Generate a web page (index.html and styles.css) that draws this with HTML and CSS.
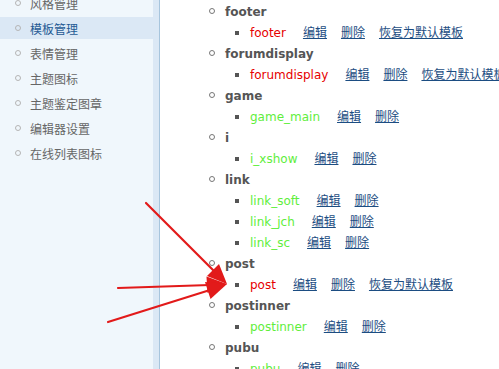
FILE: index.html
```html
<!DOCTYPE html>
<html>
<head>
<meta charset="utf-8">
<link rel="stylesheet" href="styles.css">
</head>
<body>
<div class="page">
  <aside class="sidebar">
    <ul class="menu">
      <li class="menu-item">风格管理</li>
      <li class="menu-item active">模板管理</li>
      <li class="menu-item">表情管理</li>
      <li class="menu-item">主题图标</li>
      <li class="menu-item">主题鉴定图章</li>
      <li class="menu-item">编辑器设置</li>
      <li class="menu-item">在线列表图标</li>
    </ul>
  </aside>
  <main class="main">
    <ul class="tree">
      <li class="group"><span class="label">footer</span>
        <ul class="files">
          <li class="file"><span class="name red">footer</span><a class="op first" href="#">编辑</a><a class="op" href="#">删除</a><a class="op" href="#">恢复为默认模板</a></li>
        </ul>
      </li>
      <li class="group"><span class="label">forumdisplay</span>
        <ul class="files">
          <li class="file"><span class="name red">forumdisplay</span><a class="op first" href="#">编辑</a><a class="op" href="#">删除</a><a class="op" href="#">恢复为默认模板</a></li>
        </ul>
      </li>
      <li class="group"><span class="label">game</span>
        <ul class="files">
          <li class="file"><span class="name green">game_main</span><a class="op first" href="#">编辑</a><a class="op" href="#">删除</a></li>
        </ul>
      </li>
      <li class="group"><span class="label">i</span>
        <ul class="files">
          <li class="file"><span class="name green">i_xshow</span><a class="op first" href="#">编辑</a><a class="op" href="#">删除</a></li>
        </ul>
      </li>
      <li class="group"><span class="label">link</span>
        <ul class="files">
          <li class="file"><span class="name green">link_soft</span><a class="op first" href="#">编辑</a><a class="op" href="#">删除</a></li>
          <li class="file"><span class="name green">link_jch</span><a class="op first" href="#">编辑</a><a class="op" href="#">删除</a></li>
          <li class="file"><span class="name green">link_sc</span><a class="op first" href="#">编辑</a><a class="op" href="#">删除</a></li>
        </ul>
      </li>
      <li class="group"><span class="label">post</span>
        <ul class="files">
          <li class="file"><span class="name red">post</span><a class="op first" href="#">编辑</a><a class="op" href="#">删除</a><a class="op" href="#">恢复为默认模板</a></li>
        </ul>
      </li>
      <li class="group"><span class="label">postinner</span>
        <ul class="files">
          <li class="file"><span class="name green">postinner</span><a class="op first" href="#">编辑</a><a class="op" href="#">删除</a></li>
        </ul>
      </li>
      <li class="group"><span class="label">pubu</span>
        <ul class="files">
          <li class="file"><span class="name green">pubu</span><a class="op first" href="#">编辑</a><a class="op" href="#">删除</a></li>
        </ul>
      </li>
    </ul>
  </main>
  <svg class="arrows" width="499" height="369" viewBox="0 0 499 369">
    <g stroke="#e21a1a" stroke-width="2.2" stroke-linecap="round" fill="none">
      <line x1="146" y1="203" x2="216" y2="273"/>
      <line x1="118" y1="288" x2="210" y2="285"/>
      <line x1="108" y1="322" x2="210" y2="290"/>
    </g>
    <g fill="#e21a1a">
      <polygon points="227,284 207,276 219,264"/>
      <polygon points="227,284 206.5,276.5 207.5,293"/>
      <polygon points="227,284 205,282 210.5,299"/>
    </g>
  </svg>
</div>
</body>
</html>
```

FILE: styles.css
```css
html, body {
  margin: 0;
  padding: 0;
  background: #ffffff;
}

.page {
  position: relative;
  display: flex;
  width: 499px;
  height: 369px;
  overflow: hidden;
}

.sidebar {
  flex: 0 0 159px;
  height: 369px;
  background: #f0f7fc;
  box-shadow: inset -6px 0 0 #dbe8f5;
  border-right: 1px solid #a7c5dd;
}

.menu {
  list-style: none;
  margin: -8px 0 0 0;
  padding: 0;
  display: flex;
  flex-direction: column;
  gap: 3px;
}

.menu-item {
  display: flex;
  align-items: center;
  height: 22px;
  padding-left: 15px;
  font-family: "Noto Sans CJK SC", sans-serif;
  font-size: 12px;
  color: #666666;
}

.menu-item::before {
  content: "";
  display: inline-block;
  width: 4px;
  height: 4px;
  border: 1px solid #b5b5b5;
  border-radius: 50%;
  margin-right: 9px;
}

.menu-item.active {
  background: #dbe8f5;
  color: #1f5a94;
}

.main {
  flex: 1;
  font-family: "DejaVu Sans", Verdana, sans-serif;
  font-size: 12px;
}

.tree {
  list-style: none;
  margin: 0;
  padding: 2px 0 0 65px;
  line-height: 21px;
}

.label {
  display: block;
  height: 21px;
  font-weight: bold;
  color: #555555;
}

.label::before {
  content: "";
  display: inline-block;
  width: 4px;
  height: 4px;
  border: 1px solid #777777;
  border-radius: 50%;
  margin-left: -16px;
  margin-right: 10px;
  vertical-align: 2px;
}

.files {
  list-style: none;
  margin: 0;
  padding: 0 0 0 25px;
}

.file {
  height: 21px;
  white-space: nowrap;
}

.file::before {
  content: "";
  display: inline-block;
  width: 4px;
  height: 4px;
  background: #555555;
  margin-left: -15px;
  margin-right: 11px;
  vertical-align: 2px;
}

.name.red {
  color: #e60000;
}

.name.green {
  color: #5fee3c;
}

.op {
  font-family: "Noto Sans CJK SC", sans-serif;
  font-size: 12px;
  line-height: 1;
  color: #1c4d82;
  text-decoration: underline;
  margin-left: 14px;
}

.op.first {
  margin-left: 17px;
}

.arrows {
  position: absolute;
  top: 0;
  left: 0;
  pointer-events: none;
}
```
